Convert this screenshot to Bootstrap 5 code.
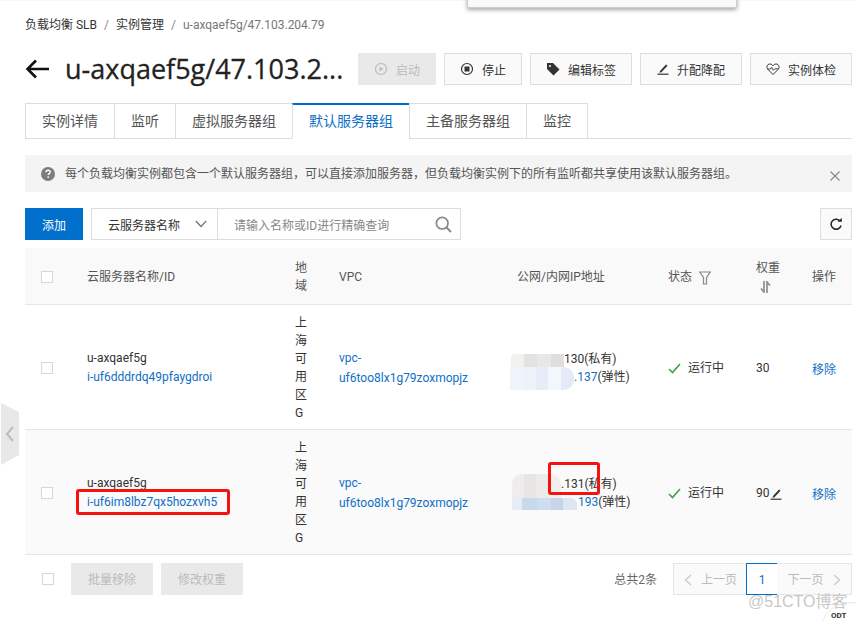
<!DOCTYPE html>
<html lang="en">
<head>
  <meta charset="UTF-8" />
  <meta name="viewport" content="width=device-width, initial-scale=1.0"/>
  <title>默认服务器组</title>
  <link href="https://cdn.jsdelivr.net/npm/bootstrap@5.3.3/dist/css/bootstrap.min.css" rel="stylesheet">
  <style>
    html, body { height: 100%; }
    body {
      font-family: Roboto, "Noto Sans CJK SC", sans-serif;
      font-size: 12px;
      line-height: 18px;
      color: #333;
      background: #fff;
      overflow: hidden;
    }
    a { color: #0f6fc6; text-decoration: none; }

    .slb-page { padding: 15px 4px 0 25px; height: 621px; border-top: 1px solid #f6f6f6; }

    /* breadcrumb */
    .slb-crumb { --bs-breadcrumb-margin-bottom: 0; --bs-breadcrumb-item-padding-x: 7px; --bs-breadcrumb-divider-color: #888; height: 18px; }
    .slb-crumb .breadcrumb-item { color: #333; }
    .slb-crumb .breadcrumb-item.active { color: #777; }

    /* title row */
    .slb-head { margin-top: 19px; height: 32px; }
    .slb-back { width: 24px; margin-right: 16px; flex: none; }
    .slb-title { width: 283px; flex: none; white-space: nowrap; font-family: "Open Sans", sans-serif; font-size: 27px; line-height: 34px; font-weight: 400; color: #222; margin: 0 10px 0 0; -webkit-text-stroke: .3px #222; }
    .slb-btn { height: 32px; border: 1px solid #ddd; background: #fafafa; color: #333; font-size: 12px; border-radius: 0; padding: 3px 0 0; display: flex; align-items: center; justify-content: center; gap: 8px; }
    .slb-btn svg { margin-top: -3px; }
    .slb-btn.is-off { background: #e9e9e9; border-color: #e9e9e9; color: #bbb; opacity: 1; }
    .w-78 { width: 78px; }
    .w-102 { width: 102px; }
    .w-82 { width: 82px; }

    /* tabs */
    .slb-tabs { margin-top: 18px; height: 36px; --bs-nav-tabs-border-color: #ddd; --bs-nav-tabs-border-radius: 0; --bs-nav-tabs-border-width: 1px; border-bottom: 1px solid #ddd; }
    .slb-tabs .nav-link { height: 36px; margin: 0 -1px 0 0; padding: 0 16px; line-height: 34px; font-size: 14px; color: #555; border: 1px solid #ddd; border-radius: 0; background: #fff; }
    .slb-tabs .nav-link.active { color: #0f6fc6; border-top: 2px solid #0070cc; border-bottom-color: #fff; line-height: 33px; }

    /* tip */
    .slb-tip { margin: 16px 0 16px; height: 37px; background: #f4f4f4; padding: 0 12px 0 16px; color: #555; }
    .slb-tip-text { margin-left: 10px; line-height: 36px; }

    /* toolbar */
    .slb-tools { height: 32px; gap: 8px; }
    .slb-add { width: 58px; height: 32px; background: #0070cc; color: #fff; border: 0; border-radius: 0; padding: 3px 0 0; font-size: 12px; }
    .slb-search { width: 370px; height: 32px; border: 1px solid #ddd; background: #fff; }
    .slb-select { width: 126px; padding: 3px 10px 0 16px; border-right: 1px solid #ddd; }
    .slb-input { padding: 3px 8px 0 16px; color: #888; }
    .slb-tools svg { margin-top: -3px; }
    .slb-refresh { width: 32px; height: 32px; margin-left: auto; }

    /* table */
    .slb-table { width: 827px; table-layout: fixed; margin: 8px 0 0; --bs-table-bg: transparent; --bs-table-color: #333; border-color: #e6e6e6; }
    .slb-table > :not(caption) > * > * { padding: 9px 8px 7px; border-bottom-width: 1px; border-color: #e6e6e6; box-shadow: none; vertical-align: middle; }
    .slb-table thead th { font-weight: 400; padding-top: 11px; padding-bottom: 9px; background: #f9f9f9; color: #555; }
    .slb-table tbody tr.is-alt td { background: #fafafa; }
    .slb-table .cell-region { padding-right: 16px; word-break: break-all; }
    .slb-table .cell-vpc { padding-right: 30px; line-height: 20px; }
    .slb-table .cell-name { line-height: 19px; }
    .slb-check { width: 12px; height: 12px; border: 1px solid #d7d7d7; background: #fff; display: block; margin-left: 8px; }
    .slb-table .cell-op { padding-top: 12px; }
    .slb-state { gap: 7px; }

    /* blurred addresses */
    .ip-line { display: block; white-space: nowrap; height: 18px; }
    .ip-gap { display: inline-block; height: 18px; vertical-align: top; position: relative; }
    .ip-blur { position: absolute; left: 0; right: 0; }
    .gap-a { width: 47px; }
    .gap-b { width: 57px; }
    .gap-c { width: 44px; }
    .gap-d { width: 61px; }
    .blur-a { left: -6px; top: 4px; height: 13px; border-radius: 4px 0 0 0; background: linear-gradient(90deg, #f1f1ed 25%, #e2e2e0 25% 50%, #e8e8e6 50% 75%, #dfdedc 75%); }
    .blur-b { left: -7px; top: -1px; height: 23px; border-radius: 0 10px 10px 0; background: linear-gradient(90deg, #f1f4fb 20%, #eef3fa 20% 40%, #e6edf8 40% 60%, #f3f6fb 60% 80%, #e4eaf8 80%); }
    .blur-c { left: -5px; top: -1px; height: 24px; border-radius: 10px 10px 0 0; background: linear-gradient(90deg, #eeecec 25%, #e8e6e5 25% 50%, #ecebea 50% 75%, #f0efee 75%); }
    .blur-d { left: -5px; top: 5px; height: 12px; right: 1px; border-radius: 0 6px 0 0; background: linear-gradient(90deg, #e8edf5 15%, #c9d9ec 15% 40%, #cfddef 40% 60%, #c5d6eb 60% 78%, #dde6f1 78%); }

    /* red marks */
    .slb-mark { position: relative; display: inline-block; }
    .mark-box { position: absolute; border: 3px solid #f5130f; border-radius: 3px; pointer-events: none; }
    .mark-id { left: -11px; top: -4px; width: 154px; height: 26px; }
    .mark-ip { left: -13px; top: -13px; width: 52px; height: 33px; }

    /* footer */
    .slb-foot { height: 32px; margin-top: 8px; }
    .slb-foot .slb-check { margin: 0 17px 0 17px; }
    .slb-foot .slb-btn { padding-top: 2px; }
    .slb-total { color: #666; margin-right: 16px; padding-top: 1px; }
    .slb-pager { --bs-pagination-border-radius: 0; margin: 0; }
    .slb-pager .page-link { height: 32px; font-size: 12px; line-height: 30px; padding: 1px 0 0; color: #bbb; background: #fafafa; border: 1px solid #e5e5e5; border-radius: 0 !important; margin: 0; display: flex; align-items: center; justify-content: center; gap: 9px; }
    .slb-pager .page-prev { width: 74px; border-right: 0; }
    .slb-pager .page-next { width: 75px; border-left: 0; }
    .slb-pager .page-now { width: 32px; color: #0f6fc6; background: #fff; border-color: #0070cc; }

    /* things on top of the page */
    .slb-popup { position: absolute; left: 467px; top: -4px; width: 270px; height: 12px; background: #f8f9fa; border: 1px solid #ccc; border-radius: 2px; box-shadow: 0 2px 4px rgba(0, 0, 0, .35); }
    .slb-handle { position: absolute; left: 1px; top: 403px; }
    .slb-water { position: absolute; left: 748px; top: 591px; font-family: "Liberation Sans", "Noto Sans CJK SC", sans-serif; font-size: 16px; line-height: 22px; color: #c8c8c8; }
    .slb-badge { position: absolute; left: 820px; top: 602px; width: 36px; height: 19px; overflow: hidden; padding: 9px 0 0 11px; font-size: 8px; font-weight: 700; line-height: 10px; color: #333; }
    .slb-badge::before { content: ""; position: absolute; left: 0; top: 0; width: 60px; height: 60px; border: 1px solid #e8e8e8; border-radius: 50%; }
  </style>
</head>
<body>
  <div class="slb-page">
    <nav>
      <ol class="breadcrumb slb-crumb">
        <li class="breadcrumb-item">负载均衡 SLB</li>
        <li class="breadcrumb-item">实例管理</li>
        <li class="breadcrumb-item active">u-axqaef5g/47.103.204.79</li>
      </ol>
    </nav>

    <div class="d-flex align-items-center slb-head">
      <svg class="slb-back" width="24" height="20" viewBox="0 0 24 20"><path d="M24 10H2.500M11 1.500 2.500 10l8.500 8.500" fill="none" stroke="#111" stroke-width="2.600"/></svg>
      <h1 class="slb-title">u-axqaef5g/47.103.2...</h1>
      <div class="d-flex gap-2">
        <button class="btn slb-btn is-off w-78" disabled>
          <svg width="14" height="14" viewBox="0 0 14 14"><circle cx="7" cy="7" r="5.500" fill="none" stroke="#bbb" stroke-width="1.200"/><path d="M5.500 4.500v5l4-2.500z" fill="#bbb"/></svg>启动
        </button>
        <button class="btn slb-btn w-78">
          <svg width="14" height="14" viewBox="0 0 14 14"><circle cx="7" cy="7" r="5.500" fill="none" stroke="#333" stroke-width="1.200"/><rect x="4.500" y="4.500" width="5" height="5" fill="#333"/></svg>停止
        </button>
        <button class="btn slb-btn w-102">
          <svg width="14" height="14" viewBox="0 0 14 14"><path d="M1 1h6l6.500 6.500-6 6L1 7z" fill="#333"/><circle cx="4" cy="4" r="1" fill="#fafafa"/></svg>编辑标签
        </button>
        <button class="btn slb-btn w-102">
          <svg width="12" height="12" viewBox="0 0 12 12"><path d="M3 8 9 1.500l1.500 1.300L4.500 9.200 2.600 9.700z" fill="#333"/><path d="M.5 11.200h11" stroke="#333" stroke-width="1.200"/></svg>升配降配
        </button>
        <button class="btn slb-btn w-102">
          <svg width="14" height="14" viewBox="0 0 14 14"><path d="M7 12.500 1.800 7.300C.2 5.500 1 2 3.900 2 5.400 2 6.400 2.900 7 3.800 7.600 2.900 8.600 2 10.100 2c2.900 0 3.700 3.500 2.100 5.300z" fill="none" stroke="#333"/><path d="M1.500 7h3l1.200-1.700 1.600 3L8.800 6.800h3.700" fill="none" stroke="#333" stroke-width=".9"/></svg>实例体检
        </button>
      </div>
    </div>

    <ul class="nav nav-tabs slb-tabs">
      <li class="nav-item"><a class="nav-link" href="#">实例详情</a></li>
      <li class="nav-item"><a class="nav-link" href="#">监听</a></li>
      <li class="nav-item"><a class="nav-link" href="#">虚拟服务器组</a></li>
      <li class="nav-item"><a class="nav-link active" href="#">默认服务器组</a></li>
      <li class="nav-item"><a class="nav-link" href="#">主备服务器组</a></li>
      <li class="nav-item"><a class="nav-link" href="#">监控</a></li>
    </ul>

    <div class="d-flex align-items-center slb-tip">
      <svg width="14" height="14" viewBox="0 0 14 14"><circle cx="7" cy="7" r="7" fill="#7d7d7d"/><path d="M4.900 5.300C5 3.900 6 3.300 7.100 3.300c1.200 0 2.100.7 2.100 1.800 0 1.500-2 1.500-2 3" fill="none" stroke="#fff" stroke-width="1.400"/><rect x="6.400" y="9.300" width="1.500" height="1.500" fill="#fff"/></svg>
      <span class="slb-tip-text flex-grow-1">每个负载均衡实例都包含一个默认服务器组，可以直接添加服务器，但负载均衡实例下的所有监听都共享使用该默认服务器组。</span>
      <svg width="10" height="10" viewBox="0 0 10 10" class="mt-1"><path d="M.5.500l9 9M9.500.500l-9 9" stroke="#888" stroke-width="1.200"/></svg>
    </div>

    <div class="d-flex slb-tools">
      <button class="btn slb-add">添加</button>
      <div class="d-flex slb-search">
        <div class="d-flex align-items-center justify-content-between slb-select">
          <span>云服务器名称</span>
          <svg width="12" height="8" viewBox="0 0 12 8"><path d="M.8 1 6 6.500 11.200 1" fill="none" stroke="#777" stroke-width="1.300"/></svg>
        </div>
        <div class="d-flex align-items-center justify-content-between flex-grow-1 slb-input">
          <span>请输入名称或ID进行精确查询</span>
          <svg width="17" height="17" viewBox="0 0 17 17"><circle cx="7.200" cy="7.200" r="5.800" fill="none" stroke="#888" stroke-width="1.700"/><path d="m11.500 11.500 4.500 4.500" stroke="#888" stroke-width="2"/></svg>
        </div>
      </div>
      <button class="btn slb-btn slb-refresh">
        <svg width="13" height="13" viewBox="0 0 13 13"><path d="M11 7.500A5 5 0 1 1 9.600 2.600" fill="none" stroke="#222" stroke-width="1.500"/><path d="M7.500 3.800h4.300V0z" fill="#222"/></svg>
      </button>
    </div>

    <table class="table align-middle slb-table">
      <colgroup>
        <col style="width:54px"><col style="width:208px"><col style="width:44px"><col style="width:178px">
        <col style="width:151px"><col style="width:88px"><col style="width:56px"><col style="width:48px">
      </colgroup>
      <thead>
        <tr>
          <th><span class="slb-check"></span></th>
          <th>云服务器名称/ID</th>
          <th class="cell-region">地域</th>
          <th>VPC</th>
          <th>公网/内网IP地址</th>
          <th>状态
            <svg class="ms-1" width="12" height="14" viewBox="0 0 12 14"><path d="M.8 1h10.400L7.500 6.500V13H4.500V6.500z" fill="none" stroke="#888" stroke-width="1.200"/></svg>
          </th>
          <th>权重<br>
            <svg class="ms-1" width="12" height="12" viewBox="0 0 12 12"><path d="M4 0v11L1 7.500M7 12V1l3 3.500" fill="none" stroke="#888" stroke-width="1.600"/></svg>
          </th>
          <th>操作</th>
        </tr>
      </thead>
      <tbody>
        <tr>
          <td><span class="slb-check"></span></td>
          <td class="cell-name">u-axqaef5g<br><a href="#">i-uf6dddrdq49pfaygdroi</a></td>
          <td class="cell-region">上海可用区G</td>
          <td class="cell-vpc"><a href="#">vpc-uf6too8lx1g79zoxmopjz</a></td>
          <td>
            <span class="ip-line"><span class="ip-gap gap-a"><span class="ip-blur blur-a"></span></span>130(私有)</span>
            <span class="ip-line"><span class="ip-gap gap-b"><span class="ip-blur blur-b"></span></span><a href="#">.137</a>(弹性)</span>
          </td>
          <td>
            <div class="d-flex align-items-center slb-state">
              <svg width="13" height="11" viewBox="0 0 13 11"><path d="m1 6 3.500 3.500L12 1" fill="none" stroke="#3fa33f" stroke-width="1.600"/></svg>运行中
            </div>
          </td>
          <td>30</td>
          <td class="cell-op"><a href="#">移除</a></td>
        </tr>
        <tr class="is-alt">
          <td><span class="slb-check"></span></td>
          <td class="cell-name">u-axqaef5g<br><span class="slb-mark"><a href="#">i-uf6im8lbz7qx5hozxvh5</a><span class="mark-box mark-id"></span></span></td>
          <td class="cell-region">上海可用区G</td>
          <td class="cell-vpc"><a href="#">vpc-uf6too8lx1g79zoxmopjz</a></td>
          <td>
            <span class="ip-line"><span class="ip-gap gap-c"><span class="ip-blur blur-c"></span></span><span class="slb-mark">.131<span class="mark-box mark-ip"></span></span>(私有)</span>
            <span class="ip-line"><span class="ip-gap gap-d"><span class="ip-blur blur-d"></span></span><a href="#">193</a>(弹性)</span>
          </td>
          <td>
            <div class="d-flex align-items-center slb-state">
              <svg width="13" height="11" viewBox="0 0 13 11"><path d="m1 6 3.500 3.500L12 1" fill="none" stroke="#3fa33f" stroke-width="1.600"/></svg>运行中
            </div>
          </td>
          <td>90<svg width="12" height="12" viewBox="0 0 12 12"><path d="M3 8 9 1.500l1.500 1.300L4.500 9.200 2.600 9.700z" fill="#333"/><path d="M.5 11.200h11" stroke="#333" stroke-width="1.200"/></svg></td>
          <td class="cell-op"><a href="#">移除</a></td>
        </tr>
      </tbody>
    </table>

    <div class="d-flex align-items-center slb-foot">
      <span class="slb-check"></span>
      <div class="d-flex gap-2">
        <button class="btn slb-btn is-off w-82" disabled>批量移除</button>
        <button class="btn slb-btn is-off w-82" disabled>修改权重</button>
      </div>
      <span class="slb-total ms-auto">总共2条</span>
      <ul class="pagination slb-pager">
        <li class="page-item"><a class="page-link page-prev" href="#">
          <svg width="8" height="12" viewBox="0 0 8 12"><path d="M7 1 1.500 6 7 11" fill="none" stroke="#ccc" stroke-width="1.500"/></svg>上一页</a></li>
        <li class="page-item"><a class="page-link page-now" href="#">1</a></li>
        <li class="page-item"><a class="page-link page-next" href="#">下一页
          <svg width="8" height="12" viewBox="0 0 8 12"><path d="M1 1l5.500 5L1 11" fill="none" stroke="#ccc" stroke-width="1.500"/></svg></a></li>
      </ul>
    </div>
  </div>

  <div class="slb-popup"></div>
  <svg class="slb-handle" width="18" height="62" viewBox="0 0 18 62"><path d="M0 0 18 9V52L0 62z" fill="#e8e8e8"/><path d="M12 24 6 31l6 7" fill="none" stroke="#bbb" stroke-width="2"/></svg>
  <div class="slb-water">@51CTO博客</div>
  <div class="slb-badge">ODT</div>

  <script src="https://cdn.jsdelivr.net/npm/bootstrap@5.3.3/dist/js/bootstrap.bundle.min.js"></script>
</body>
</html>
